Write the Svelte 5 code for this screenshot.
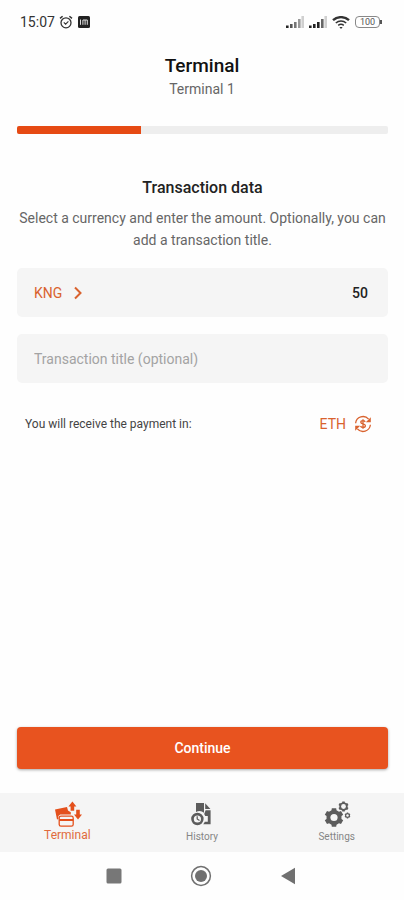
<script lang="ts">
	let currency = $state('KNG');
	let amount = $state('50');
	let title = $state('');
	let activeTab = $state('terminal');

	const step = 1;
	const steps = 3;

	const tabs = [
		{ id: 'terminal', label: 'Terminal' },
		{ id: 'history', label: 'History' },
		{ id: 'settings', label: 'Settings' }
	];

	function gear(cx: number, cy: number, outer: number, inner: number, teeth: number) {
		const points: string[] = [];
		const slice = (Math.PI * 2) / teeth;
		const corners = [[-0.32, inner], [-0.22, outer], [0.22, outer], [0.32, inner]];
		for (let i = 0; i < teeth; i++) {
			for (const [offset, r] of corners) {
				const a = (i + offset) * slice - Math.PI / 2;
				points.push(`${(cx + r * Math.cos(a)).toFixed(2)},${(cy + r * Math.sin(a)).toFixed(2)}`);
			}
		}
		return points.join(' ');
	}
</script>

<div class="screen">
	<div class="status">
		<div class="status-group">
			<span class="clock">15:07</span>
			<svg width="14" height="14" viewBox="0 0 14 14" fill="none" stroke="#333">
				<circle cx="7" cy="7.8" r="5" stroke-width="1.3" />
				<path d="M1 3.4 3.6 1.2M13 3.4 10.4 1.2" stroke-width="1.5" />
				<path d="m4.8 7.4 1.8 1.8 2.8-2.8" stroke-width="1.1" />
			</svg>
			<svg class="app-badge" width="12" height="12" viewBox="0 0 12 12">
				<rect width="12" height="12" rx="1.5" fill="#222" />
				<path d="M2.5 8.8V3.5M4.9 8.8V4h4.4v4.8M7.1 4v4.8" fill="none" stroke="#ddd" stroke-width="1" />
			</svg>
		</div>
		<div class="status-group">
			{#each [1, 2] as sim (sim)}
				<svg class="signal" width="18" height="12" viewBox="0 0 18 12">
					<path d="M0 9.5h2.6V12H0z" fill="#222" />
					<path d="M4 8h2.6v4H4z" fill={sim === 1 ? '#555' : '#222'} />
					<path d="M8 6h2.6v6H8z" fill={sim === 1 ? '#777' : '#222'} />
					<path d="M12 3h2.6v9H12z" fill={sim === 1 ? '#999' : '#666'} />
					<path d="M15.4 0H18v12h-2.6z" fill="#d0d0d0" />
				</svg>
			{/each}
			<svg class="wifi" width="18" height="13" viewBox="0 0 18 13" fill="none" stroke="#333">
				<path d="M1 4.2a12 12 0 0 1 16 0" stroke-width="2.4" />
				<path d="M3.8 7a8 8 0 0 1 10.4 0" stroke-width="1.5" />
				<path d="M6.2 9.4a4.4 4.4 0 0 1 5.6 0" stroke-width="1.4" />
				<path d="m7.4 11 1.6 2 1.6-2z" fill="#333" stroke="none" />
			</svg>
			<div class="battery"><span>100</span></div>
		</div>
	</div>

	<header>
		<h1>Terminal</h1>
		<p>Terminal 1</p>
	</header>

	<main>
		<div class="progress" role="progressbar" aria-label="Step" aria-valuemin="0" aria-valuemax={steps} aria-valuenow={step}>
			<div class="progress-fill" style="width: {(step / steps) * 100}%"></div>
		</div>

		<h2>Transaction data</h2>
		<p class="intro">
			Select a currency and enter the amount. Optionally, you can add a transaction title.
		</p>

		<div class="field">
			<button type="button" class="pick">
				{currency}
				<svg width="10" height="14" viewBox="0 0 10 14" fill="none" stroke="currentColor" stroke-width="2">
					<path d="m2 1.5 5.5 5.5L2 12.5" />
				</svg>
			</button>
			<input class="amount" type="text" inputmode="decimal" aria-label="Amount" bind:value={amount} />
		</div>

		<div class="field">
			<input class="title" type="text" aria-label="Transaction title" placeholder="Transaction title (optional)" bind:value={title} />
		</div>

		<div class="receive">
			<span>You will receive the payment in:</span>
			<button type="button" class="pick">
				ETH
				<svg width="18" height="18" viewBox="0 0 18 18" fill="none" stroke="currentColor" stroke-width="1.3">
					<path d="M1.6 8.2A7.4 7.4 0 0 1 14.6 4.2M16.4 9.8A7.4 7.4 0 0 1 3.4 13.8" />
					<path d="M16.8 2.2v5h-5zM1.2 15.8v-5h5z" fill="currentColor" stroke="none" />
					<path d="M11.2 6.8C10.6 5.9 9.9 5.7 9 5.7c-1.3 0-2.2.6-2.2 1.6 0 2.3 4.6 1 4.6 3.4 0 1-1 1.7-2.4 1.7-1.1 0-2-.4-2.5-1.3M9 4.2v9.6" />
				</svg>
			</button>
		</div>

		<button type="button" class="continue">Continue</button>
	</main>

	<nav class="tabs">
		{#each tabs as tab (tab.id)}
			<button
				type="button"
				class="tab"
				class:active={activeTab === tab.id}
				aria-current={activeTab === tab.id ? 'page' : undefined}
				onclick={() => (activeTab = tab.id)}
			>
				<svg width="28" height="26" viewBox="0 0 28 26" fill="currentColor">
					{#if tab.id === 'terminal'}
						<path d="M2 8.4 14 6l1 3.6 2.8 1.6v2.2H7.2L5.4 15v3l-1.4.4z" />
						<path d="m19.4.4 4 5h-2.2v4.4h-3.6V5.4h-2.2z" />
						<path d="m25 18.4-4-5h2.200V8.800h3.600v4.600H29z" />
						<rect x="6.200" y="15.200" width="14" height="10" rx="1.800" fill="none" stroke="currentColor" stroke-width="1.300" />
						<path d="M6.200 18h14v2h-14z" />
					{:else if tab.id === 'history'}
						<path d="M8 2h8v9.8a7 7 0 0 0-8-.8z" />
						<path d="M17.2 2.2 22.4 8h-5.200z" />
						<path d="M17.600 9.200h5V23.200h-7.400a7 7 0 0 0 1.600-2.400h3V15h-2.600l-1-2z" />
						<circle cx="9.4" cy="18" r="4.9" fill="none" stroke="currentColor" stroke-width="2.6" />
						<path d="M9.2 15.200V18l2.300 1.500" fill="none" stroke="currentColor" stroke-width="1.2" />
					{:else}
						<polygon points={gear(11, 16.5, 9.6, 7.6, 6)} />
						<circle class="hole" cx="11" cy="16.5" r="3.6" />
						<polygon points={gear(20.5, 5.5, 5.2, 4.2, 6)} />
						<circle class="hole" cx="20.5" cy="5.5" r="2.4" />
						<polygon points={gear(24.5, 14.5, 3, 2.5, 6)} />
						<circle class="hole" cx="24.5" cy="14.5" r="1.2" />
					{/if}
				</svg>
				<span>{tab.label}</span>
			</button>
		{/each}
	</nav>

	<div class="system">
		<button type="button" aria-label="Recent apps">
			<svg width="22" height="22" viewBox="0 0 22 22"><rect x="3.5" y="3.5" width="15" height="15" rx="1.5" fill="#777" /></svg>
		</button>
		<button type="button" aria-label="Home">
			<svg width="22" height="22" viewBox="0 0 22 22">
				<circle cx="11" cy="11" r="9.4" fill="none" stroke="#707070" stroke-width="1.5" />
				<circle cx="11" cy="11" r="6" fill="#707070" />
			</svg>
		</button>
		<button type="button" aria-label="Back">
			<svg width="22" height="22" viewBox="0 0 22 22"><path d="M4 11 18 2.8v16.4z" fill="#707070" /></svg>
		</button>
	</div>
</div>

<style>
	:global(body) { background: #fefefe; }
	.screen {
		display: flex;
		flex-direction: column;
		min-height: 100vh;
		font-family: Roboto, 'Liberation Sans', sans-serif;
		color: #222;
	}
	h1, h2, p { margin: 0; }
	button, input { font-family: inherit; border: none; background: none; padding: 0; }
	button { cursor: pointer; }
	input { min-width: 0; }
	input:focus { outline: none; }

	.status {
		display: flex;
		justify-content: space-between;
		align-items: center;
		height: 44px;
		padding: 0 24px 0 20px;
	}
	.status-group { display: flex; align-items: center; gap: 4px; }
	.clock { font-size: 14px; line-height: 16px; color: #333; }
	.app-badge { margin-left: 1px; }
	.signal, .wifi { margin-right: 1px; }
	.battery {
		position: relative;
		box-sizing: border-box;
		width: 25px;
		height: 12px;
		border: 1px solid #888;
		border-radius: 4px;
		font-size: 9px;
		line-height: 10px;
		text-align: center;
		color: #555;
	}
	.battery::after {
		content: '';
		position: absolute;
		right: -3px;
		top: 3px;
		width: 2px;
		height: 4px;
		background: #555;
	}

	header { padding: 10px 16px 0; text-align: center; }
	h1 { font-size: 19px; line-height: 24px; font-weight: 500; color: #111; }
	header p { font-size: 14px; line-height: 22px; color: #666; }

	main {
		flex: 1;
		display: flex;
		flex-direction: column;
		padding: 26px 16px 24px 17px;
	}
	.progress { height: 8px; border-radius: 2px; background: #eee; overflow: hidden; }
	.progress-fill { height: 100%; background: #e64a14; }
	h2 {
		margin-top: 44px;
		font-size: 16px;
		line-height: 20px;
		font-weight: 500;
		text-align: center;
	}
	.intro {
		margin: 9px 0 17px;
		font-size: 14px;
		line-height: 22px;
		text-align: center;
		color: #666;
	}
	.field {
		display: flex;
		align-items: center;
		justify-content: space-between;
		height: 49px;
		margin-bottom: 17px;
		padding: 0 20px 0 17px;
		border-radius: 5px;
		background: #f5f5f5;
	}
	.pick {
		display: flex;
		align-items: center;
		gap: 11px;
		font-size: 14px;
		line-height: 20px;
		color: #d9622e;
	}
	.amount {
		width: 120px;
		font-size: 14px;
		font-weight: 500;
		text-align: right;
		color: #222;
	}
	.title { flex: 1; font-size: 14px; color: #222; }
	.title::placeholder { color: #a3a3a3; opacity: 1; }
	.receive {
		display: flex;
		align-items: center;
		justify-content: space-between;
		padding: 14px 16px 0 8px;
		font-size: 12px;
		line-height: 20px;
		color: #444;
	}
	.receive .pick { gap: 8px; }
	.continue {
		height: 42px;
		margin-top: auto;
		border-radius: 4px;
		background: #e8531f;
		box-shadow: 0 1px 3px rgba(0, 0, 0, 0.35);
		font-size: 14px;
		font-weight: 500;
		color: #fff;
	}

	.tabs { display: grid; grid-template-columns: repeat(3, 1fr); height: 59px; background: #f5f5f5; }
	.tab {
		display: flex;
		flex-direction: column;
		align-items: center;
		justify-content: flex-start;
		padding-top: 8px;
		font-size: 10px;
		line-height: 20px;
		color: #5c5c5c;
	}
	.tab svg { overflow: visible; }
	.tab span { color: #858585; }
	.tab.active { font-size: 12px; line-height: 16px; color: #e4501c; }
	.tab.active span { color: #e06a3c; }
	.hole { fill: #f5f5f5; }

	.system {
		display: flex;
		align-items: center;
		justify-content: center;
		gap: 65px;
		height: 48px;
		padding-right: 2px;
	}
	.system button { display: flex; }
</style>
